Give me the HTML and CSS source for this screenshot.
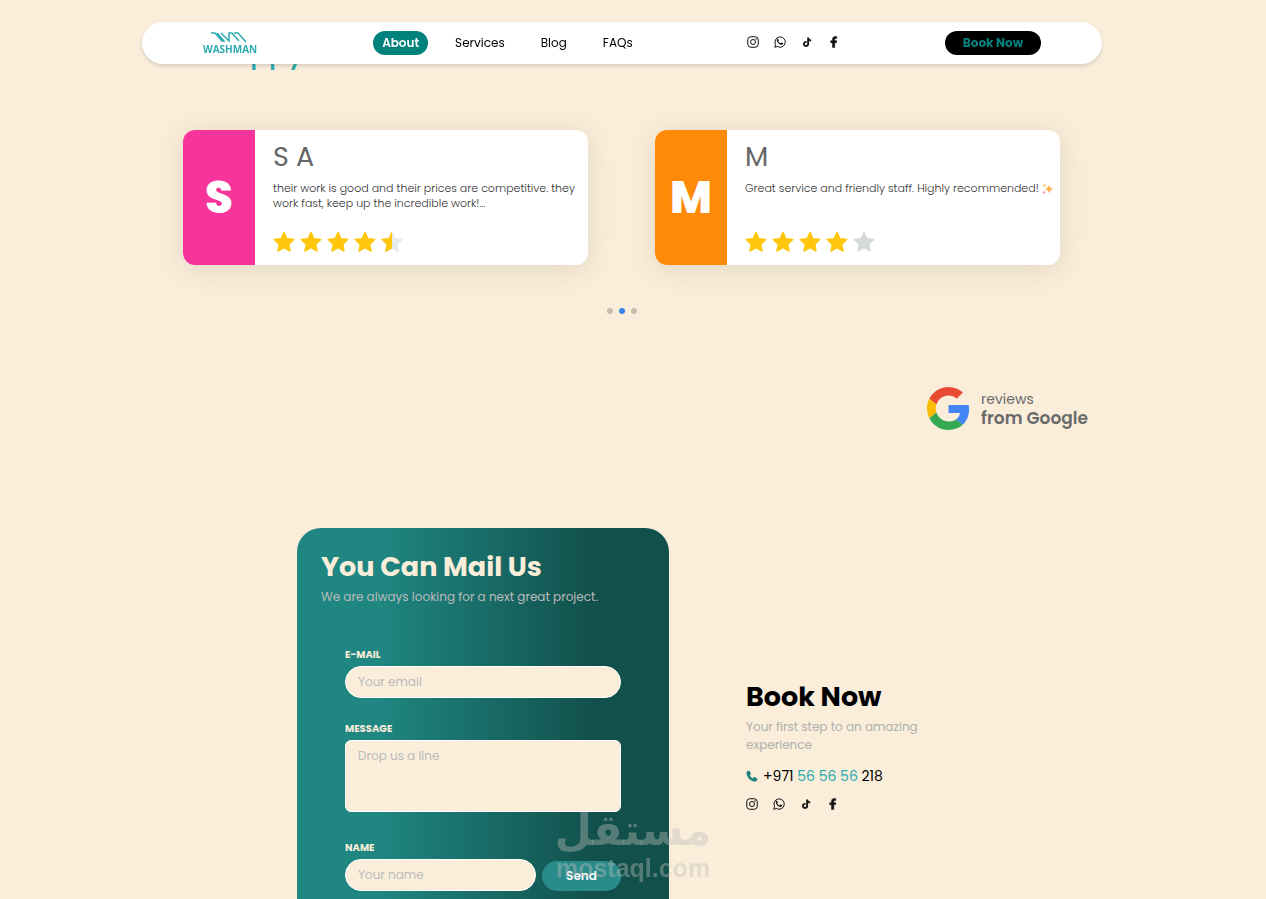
FILE: index.html
```html
<!DOCTYPE html>
<html lang="en">
<head>
<meta charset="utf-8">
<meta name="viewport" content="width=device-width, initial-scale=1">
<title>Washman</title>
<link rel="stylesheet" href="styles.css">
</head>
<body>
<svg class="sprite" aria-hidden="true">
  <symbol id="instagram" viewBox="0 0 24 24"><g fill="none" stroke="currentColor" stroke-width="2"><rect x="1.5" y="1.5" width="21" height="21" rx="6"/><circle cx="12" cy="12" r="5"/></g><circle cx="18" cy="6" r="1.5" fill="currentColor"/></symbol>
  <symbol id="whatsapp" viewBox="0 0 24 24"><path d="M1.5 22.5l1.6-5.6A10.3 10.3 0 1 1 7 21z" fill="none" stroke="currentColor" stroke-width="2" stroke-linejoin="round"/><path d="M8.700 6.300c-.3-.6-.6-.6-1.100-.6-1.200 0-2.100 1.300-2.100 2.700 0 3.600 5.800 9.300 9.400 9.300 1.900 0 3.300-1.100 3.300-2.500 0-.9-.2-1-.7-1.200l-2.200-1c-.5-.2-.7-.1-1 .3l-.9 1.100c-.3.3-.5.3-.9.100-1.700-.8-3-2-3.900-3.500-.2-.4-.1-.6.100-.9l.7-.9c.2-.3.200-.5.100-.8z" fill="currentColor"/></symbol>
  <symbol id="tiktok" viewBox="0 0 24 24"><path d="M12.500 1h4.300c.3 3 2.200 5 5.200 5.200v4.300c-1.900 0-3.600-.5-5-1.500v7.600c0 9.200-14.500 9.300-14.500.1 0-4.500 3.700-7.600 8.600-7v4.500c-2.400-.7-4.200.5-4.200 2.500 0 3.500 5.600 3.400 5.600-.5z" fill="currentColor"/></symbol>
  <symbol id="facebook" viewBox="0 0 24 24"><path d="M9 23V13.500H5.500V9.300H9V6.500C9 2.900 11 1 14.500 1c1.600 0 3 .2 3 .2v3.900h-1.900c-1.700 0-2.100.9-2.100 2v2.200h4l-.7 4.200h-3.300V23z" fill="currentColor" stroke="currentColor"/></symbol>
  <symbol id="star" viewBox="0 0 24 24"><path d="M12 1.500l3.200 6.900 7.500.9-5.500 5.200 1.400 7.500-6.600-3.700L5.400 22l1.400-7.500L1.300 9.300l7.500-.9z" fill="currentColor" stroke="currentColor" stroke-width="1.500" stroke-linejoin="round"/></symbol>
</svg>

<header class="nav">
  <a class="logo" href="#" aria-label="Washman home">
    <svg class="logo-mark" viewBox="0 0 36 11" aria-hidden="true"><path d="M0 1h4l7 8h2L6 1M10 1l8 8V1h3l7 8M23 1h4l8 9" fill="none" stroke="currentColor" stroke-width="1.500"/></svg>
    <span class="logo-name">WASHMAN</span>
  </a>
  <nav class="links">
    <a class="link active" href="#">About</a>
    <a class="link" href="#">Services</a>
    <a class="link" href="#">Blog</a>
    <a class="link" href="#">FAQs</a>
  </nav>
  <div class="social">
    <a href="#" aria-label="Instagram"><svg><use href="#instagram"/></svg></a>
    <a href="#" aria-label="WhatsApp"><svg><use href="#whatsapp"/></svg></a>
    <a class="small" href="#" aria-label="TikTok"><svg><use href="#tiktok"/></svg></a>
    <a href="#" aria-label="Facebook"><svg><use href="#facebook"/></svg></a>
  </div>
  <a class="book" href="#book">Book Now</a>
</header>

<main class="page">
  <section class="reviews">
    <h2 class="reviews-title">Our Happy Clients</h2>
    <div class="cards">
      <article class="card">
        <div class="initial pink">S</div>
        <div class="card-body">
          <h3 class="name">S A</h3>
          <p class="quote">their work is good and their prices are competitive. they work fast, keep up the incredible work!...</p>
          <div class="stars" role="img" aria-label="4.5 out of 5">
            <svg><use href="#star"/></svg><svg><use href="#star"/></svg><svg><use href="#star"/></svg><svg><use href="#star"/></svg>
            <svg viewBox="0 0 24 24"><use class="pale" href="#star" width="24" height="24"/><svg width="12" height="24" viewBox="0 0 12 24"><use href="#star" width="24" height="24"/></svg></svg>
          </div>
        </div>
      </article>
      <article class="card">
        <div class="initial orange">M</div>
        <div class="card-body">
          <h3 class="name">M</h3>
          <p class="quote">Great service and friendly staff. Highly recommended! <svg class="sparkle" viewBox="0 0 24 24" aria-hidden="true"><path d="M14 3q1.500 8 9 9-7.500 1-9 9-1.500-8-9-9 7.500-1 9-9z" fill="#ffb250"/><path d="M5 1q.6 3.400 4 4-3.400.6-4 4-.6-3.400-4-4 3.400-.6 4-4z" fill="#ffc46a"/><path d="M4 15q.5 3 3.500 3.500Q4.500 19 4 22q-.5-3-3.500-3.500Q3.500 18 4 15z" fill="#f77bb0"/></svg></p>
          <div class="stars" role="img" aria-label="4 out of 5">
            <svg><use href="#star"/></svg><svg><use href="#star"/></svg><svg><use href="#star"/></svg><svg><use href="#star"/></svg><svg class="empty"><use href="#star"/></svg>
          </div>
        </div>
      </article>
    </div>
    <div class="dots">
      <button class="dot" aria-label="Slide 1"></button>
      <button class="dot current" aria-label="Slide 2"></button>
      <button class="dot" aria-label="Slide 3"></button>
    </div>
    <div class="google">
      <svg class="google-mark" viewBox="0 0 48 48" aria-hidden="true">
        <path fill="#e84a34" d="M24 9.500c3.500 0 6.700 1.200 9.200 3.600l6.900-6.900C35.900 2.400 30.500 0 24 0 14.600 0 6.500 5.400 2.600 13.200l8 6.200C12.400 13.700 17.700 9.500 24 9.500z"/>
        <path fill="#4285f4" d="M47 24.600c0-1.600-.2-3.100-.4-4.600H24v9h12.900c-.6 3-2.200 5.500-4.700 7.200l7.700 6C44.400 38 47 31.800 47 24.600z"/>
        <path fill="#fbbc05" d="M10.500 28.600c-.5-1.500-.8-3-.8-4.600s.3-3.100.8-4.600l-8-6.200C.9 16.500 0 20.100 0 24s.9 7.500 2.600 10.800z"/>
        <path fill="#34a853" d="M24 48c6.500 0 11.900-2.100 15.900-5.800l-7.700-6c-2.200 1.500-4.900 2.300-8.200 2.300-6.300 0-11.600-4.200-13.500-9.900l-7.900 6.200C6.500 42.600 14.600 48 24 48z"/>
      </svg>
      <p class="google-text">reviews<strong>from Google</strong></p>
    </div>
  </section>

  <section class="contact" id="book">
    <form class="mail">
      <h2 class="mail-title">You Can Mail Us</h2>
      <p class="mail-sub">We are always looking for a next great project.</p>
      <div class="fields">
        <label class="label" for="email">E-MAIL</label>
        <input class="field" id="email" type="email" placeholder="Your email">
        <label class="label" for="message">MESSAGE</label>
        <textarea class="field area" id="message" placeholder="Drop us a line"></textarea>
        <label class="label" for="name">NAME</label>
        <div class="send-row">
          <input class="field" id="name" type="text" placeholder="Your name">
          <button class="send" type="button">Send</button>
        </div>
      </div>
    </form>
    <div class="info">
      <h2 class="info-title">Book Now</h2>
      <p class="info-sub">Your first step to an amazing experience</p>
      <a class="phone" href="tel:+971565656218">
        <svg viewBox="0 0 24 24" aria-hidden="true"><path d="M2.500 2.500L6.500 1l3.800 6.500-2.700 3c1 2.400 3.300 4.700 5.900 5.900l3-2.700L23 17.500l-1.500 4c-.5 1.200-1.600 1.500-2.800 1.500C9 23 1 14.500 1 5.300c0-1.200.4-2.300 1.500-2.800z" fill="currentColor"/></svg>
        <span>+971 <span class="teal">56 56 56</span> 218</span>
      </a>
      <div class="social">
        <a href="#" aria-label="Instagram"><svg><use href="#instagram"/></svg></a>
        <a href="#" aria-label="WhatsApp"><svg><use href="#whatsapp"/></svg></a>
        <a class="small" href="#" aria-label="TikTok"><svg><use href="#tiktok"/></svg></a>
        <a href="#" aria-label="Facebook"><svg><use href="#facebook"/></svg></a>
      </div>
    </div>
  </section>
</main>

<div class="watermark">
  <span class="wm-ar" lang="ar" dir="rtl">مستقل</span>
  <span class="wm-en">mostaql.com</span>
</div>
</body>
</html>
```
FILE: styles.css
```css
* { box-sizing: border-box; }
html { background: #faeedb; }
body {
  margin: 0;
  height: 100vh;
  overflow: hidden;
  padding-right: 22px;
  font-family: Poppins, Inter, "Open Sans", sans-serif;
  font-size: 12px;
  color: #000;
}
h2, h3, p { margin: 0; }
a { color: inherit; text-decoration: none; }
button { font-family: inherit; border: 0; padding: 0; cursor: pointer; }
.sprite { position: absolute; width: 0; height: 0; }

.nav {
  position: fixed;
  z-index: 5;
  top: 22px;
  left: 0;
  right: 22px;
  width: calc(100% - 306px);
  max-width: 960px;
  height: 42px;
  margin: 0 auto;
  padding: 0 61px;
  display: flex;
  align-items: center;
  justify-content: space-between;
  background: #fff;
  border-radius: 24px;
  box-shadow: 0 2px 4px rgba(0, 0, 0, .15);
}
.logo { width: 65px; color: #2cabb0; }
.logo-mark { display: block; width: 36px; height: 11px; margin-left: 8px; }
.logo-name { display: block; font: bold 10px/12px "Open Sans", sans-serif; }
.links { display: flex; align-items: center; gap: 18px; }
.link { padding: 0 9px; line-height: 24px; border-radius: 12px; }
.active { background: #00827c; color: #fff; font-weight: 600; }
.social { display: flex; align-items: center; gap: 15px; color: #111; }
.social a { display: flex; justify-content: center; width: 12px; }
.social svg { width: 12px; height: 12px; }
.social .small svg { width: 10px; height: 12px; }
.nav .social { padding-bottom: 2px; }
.book {
  width: 96px;
  line-height: 24px;
  border-radius: 12px;
  text-align: center;
  background: #000;
  color: #00827c;
  font-weight: 700;
}

.page { max-width: 960px; margin: 0 auto; }
.reviews-title {
  padding: 34px 11px 0;
  font-size: 28px;
  line-height: 40px;
  font-weight: 500;
  color: #2cabb0;
}
.cards {
  display: grid;
  grid-template-columns: 1fr 1fr;
  gap: 67px;
  margin-top: 56px;
  padding: 0 42px 0 41px;
}
.card {
  display: flex;
  min-height: 135px;
  background: #fff;
  border-radius: 12px;
  overflow: hidden;
  box-shadow: 0 4px 28px rgba(80, 70, 30, .14);
}
.initial {
  flex: 0 0 72px;
  display: flex;
  align-items: center;
  justify-content: center;
  color: #fff;
  font-size: 45px;
  font-weight: 800;
}
.pink { background: #f7339c; }
.orange { background: #ff8a08; }
.card-body {
  flex: 1;
  display: flex;
  flex-direction: column;
  padding: 12px 3px 12px 18px;
  color: #666;
}
.name { font-size: 27px; line-height: 30px; font-weight: 400; }
.quote { margin-top: 9px; font-size: 11px; line-height: 15px; font-weight: 300; color: #333; }
.sparkle { width: 12px; height: 12px; vertical-align: middle; }
.stars { display: flex; gap: 5px; margin-top: auto; color: #ffc60b; }
.stars > svg { width: 22px; height: 22px; }
.stars .pale { color: #e5ebe7; }
.stars .empty { color: #d5d9da; }
.dots { display: flex; justify-content: center; gap: 6px; margin-top: 43px; }
.dot { width: 6px; height: 6px; border-radius: 3px; background: #c9bfaf; }
.current { background: #3680e8; }
.google {
  display: flex;
  align-items: center;
  justify-content: flex-end;
  gap: 11px;
  margin-top: 73px;
  padding-right: 14px;
}
.google-mark { width: 43px; height: 43px; }
.google-text { font-size: 14px; line-height: 19px; color: #6b6b6b; }
.google-text strong { display: block; font-size: 17px; font-weight: 600; }

.contact {
  display: flex;
  align-items: center;
  justify-content: center;
  gap: 77px;
  margin-top: 98px;
}
.mail {
  width: 372px;
  padding: 24px 24px 72px;
  border-radius: 24px;
  background: linear-gradient(90deg, #1f8681 22%, #12504c 80%);
}
.mail-title, .info-title { font-size: 27px; line-height: 30px; font-weight: 700; }
.mail-title { color: #faeedb; }
.mail-sub { margin-top: 6px; font-size: 12px; line-height: 18px; color: #bbb; }
.fields { display: flex; flex-direction: column; margin-top: 41px; padding: 0 24px; }
.label {
  margin-bottom: 4px;
  font-size: 10px;
  line-height: 15px;
  font-weight: 700;
  color: #faeedb;
}
.field {
  width: 100%;
  height: 32px;
  margin: 0 0 23px;
  padding: 0 12px;
  border: 1px solid #fff;
  border-radius: 16px;
  background: #faeedb;
  font-family: inherit;
  font-size: 12px;
}
.field::placeholder { color: #bbb; }
.area { height: 72px; padding-top: 6px; line-height: 18px; border-radius: 6px; resize: none; margin-bottom: 28px; }
.send-row { display: flex; align-items: flex-end; gap: 6px; }
.send-row .field { flex: 1; min-width: 0; margin: 0; }
.send {
  width: 79px;
  height: 30px;
  border-radius: 15px;
  background: #298c8b;
  color: #fff;
  font-size: 12px;
  font-weight: 600;
}
.info { width: 201px; }
.info-sub { margin-top: 6px; font-size: 12px; line-height: 18px; color: #aeb0ac; }
.phone {
  display: flex;
  align-items: center;
  gap: 5px;
  margin-top: 13px;
  font-size: 14px;
  line-height: 18px;
}
.phone svg { width: 12px; height: 12px; color: #23837f; }
.teal { color: #2cabb0; }
.info .social { margin-top: 13px; }

.watermark {
  position: fixed;
  z-index: 9;
  left: 556px;
  top: 805px;
  width: 154px;
  display: flex;
  flex-direction: column;
  align-items: center;
  color: rgba(190, 190, 185, .4);
  pointer-events: none;
}
.wm-ar { font: bold 43px/50px "DejaVu Sans", sans-serif; }
.wm-en { font: bold 25px/26px "Liberation Sans", sans-serif; }
```
